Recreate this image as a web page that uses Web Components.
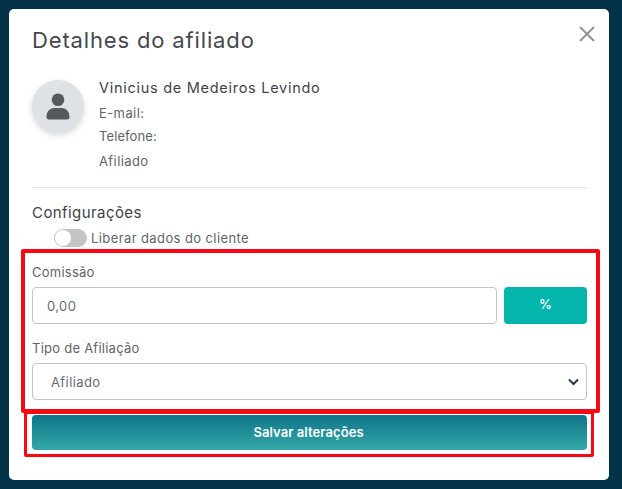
<!DOCTYPE html>
<html lang="pt"><head><meta charset="utf-8"><title>Detalhes do afiliado</title>
<style>
html,body{margin:0;height:100%}
body{width:622px;height:489px;overflow:hidden;background:#033249;font-family:Inter,"Open Sans",sans-serif;color:#3f4347;position:relative}
</style></head><body>
<affiliate-modal></affiliate-modal>
<script>
function def(name,css,html){
  customElements.define(name,class extends HTMLElement{
    constructor(){super();this.attachShadow({mode:'open'}).innerHTML='<style>'+css+'</style>'+html;}
  });
}
def('user-card',`
:host{display:flex;gap:15px;height:100px}
.av{width:52px;height:52px;border-radius:50%;background:#dee2e6;box-shadow:0 3px 6px rgba(0,0,0,.16);display:flex;align-items:center;justify-content:center;margin-top:7px;flex:none}
.name{font-size:14.5px;line-height:20px;margin-top:5px;color:#3f4347;letter-spacing:.72px}
.l{font-size:13px;line-height:17px;color:#5f6367;letter-spacing:.1px}
.l1{margin-top:7px;letter-spacing:.4px}.l2{margin-top:6px}.l3{margin-top:8px;letter-spacing:.4px}
`,`<div class="av"><svg width="24" height="27" viewBox="0 0 24 27"><circle cx="12" cy="6.8" r="6.300" fill="#55585d"/><path d="M.5 24c0-6 4-9 8-9h7c4 0 8 3 8 9a2.500 2.500 0 0 1-2.500 2.500H3A2.500 2.500 0 0 1 .5 24z" fill="#55585d"/></svg></div>
<div><div class="name">Vinicius de Medeiros Levindo</div><div class="l l1">E-mail:</div><div class="l l2">Telefone:</div><div class="l l3">Afiliado</div></div>`);
def('toggle-row',`
:host{display:flex;align-items:center;gap:4px;height:20px;padding-left:22px}
.t{width:33px;height:18px;border-radius:9px;background:#c4c4c4;position:relative;flex:none}
.t i{position:absolute;left:1px;top:1px;width:16px;height:16px;border-radius:50%;background:#fff;display:block}
span{font-size:13px;color:#5f6367;letter-spacing:.4px}
`,`<div class="t"><i></i></div><span><slot></slot></span>`);
def('field-label',`:host{display:block;font-size:13px;line-height:17px;color:#5f6367;letter-spacing:.25px}`,`<slot></slot>`);
def('text-box',`
:host{display:flex;align-items:center;height:37px;box-sizing:border-box;border:1px solid #c4c4c4;border-radius:4px;background:#fff;padding:0 14px;font-size:13px;letter-spacing:.4px;color:#666c73;flex:1;min-width:0}
`,`<slot></slot>`);
def('select-box',`
:host{display:flex;align-items:center;justify-content:space-between;height:37px;box-sizing:border-box;border:1px solid #c4c4c4;border-radius:4px;background:#fff;padding:0 7px 0 18px;font-size:13px;letter-spacing:.4px;color:#666c73}
svg{display:block}
`,`<slot></slot><svg width="11" height="8" viewBox="0 0 11 8"><path d="M1 1.500l4.500 4.500L10 1.500" fill="none" stroke="#2a3542" stroke-width="2"/></svg>`);
def('unit-button',`
:host{display:flex;align-items:center;justify-content:center;width:83px;height:37px;border-radius:4px;background:#04b5ac;color:#fff;font-size:13px;font-weight:500;flex:none;padding-bottom:3px;box-sizing:border-box}
`,`<slot></slot>`);
def('save-button',`
:host{display:flex;align-items:center;justify-content:center;height:35px;border-radius:4px;background:linear-gradient(180deg,#0f7489,#34a9a9);color:#fff;font-size:13px;font-weight:600;letter-spacing:.08px;padding-right:2px;padding-bottom:2px;box-sizing:border-box}
`,`<slot></slot>`);
def('affiliate-modal',`
:host{display:block;position:absolute;left:9px;top:9px;width:600px;height:471px;background:#fff;border-radius:5px}
.in{box-sizing:border-box;height:100%;padding:0 22px 0 23px;display:flex;flex-direction:column}
header{display:flex;justify-content:space-between;height:64px}
h1{margin:18px 0 0;font-size:22px;line-height:26px;font-weight:400;color:#45494d;letter-spacing:.85px}
.x{position:absolute;right:14px;top:17px}
hr{margin:0;border:0;border-top:1px solid #e2e2e2;height:0;flex:none;margin-top:14px}
h2{margin:16px 0 0;font-size:15px;line-height:18px;font-weight:400;color:#3f4347;letter-spacing:.42px}
toggle-row{margin-top:6px}
field-label.a{margin-top:16px;margin-bottom:6px}
field-label.b{margin-top:16px;margin-bottom:6px}
.row{display:flex;gap:7px}
save-button{margin-top:15px}
.red{position:absolute;box-sizing:border-box;border:4px solid #f60914;border-radius:2px;pointer-events:none}
.r1{left:12px;top:240px;width:579px;height:164px}
.r2{left:15px;top:402px;width:570px;height:46px;border-width:3px}
`,`<div class="in">
<header><h1>Detalhes do afiliado</h1></header>
<svg class="x" width="16" height="16" viewBox="0 0 16 16"><path d="M1 1l14 14M15 1L1 15" stroke="#8f8f8f" stroke-width="1.800" fill="none"/></svg>
<user-card></user-card>
<hr>
<h2>Configurações</h2>
<toggle-row>Liberar dados do cliente</toggle-row>
<field-label class="a">Comissão</field-label>
<div class="row"><text-box>0,00</text-box><unit-button>%</unit-button></div>
<field-label class="b">Tipo de Afiliação</field-label>
<select-box>Afiliado</select-box>
<save-button>Salvar alterações</save-button>
</div>
<div class="red r1"></div><div class="red r2"></div>`);
</script>
</body></html>
